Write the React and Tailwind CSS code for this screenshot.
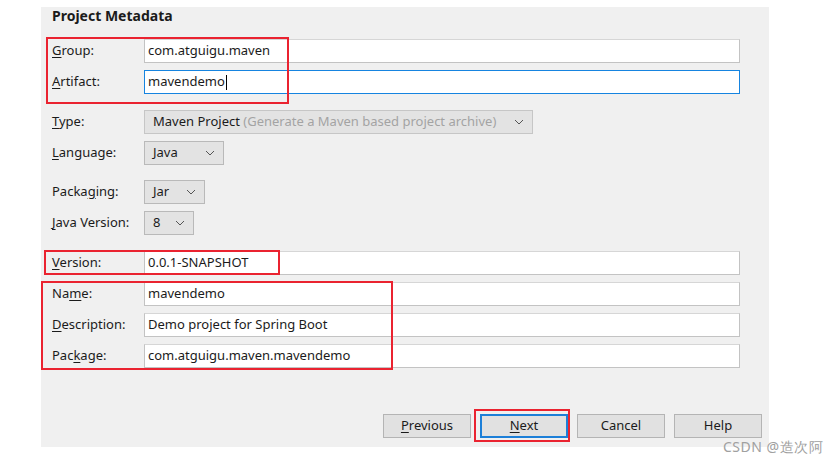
const font = { fontFamily: '"Noto Sans", "Open Sans", sans-serif' };

const U = ({ children }) => <span className="underline underline-offset-2">{children}</span>;

const Chevron = () => (
  <svg width="10" height="6" viewBox="0 0 10 6" className="shrink-0">
    <path d="M1 1l4 4 4-4" fill="none" stroke="#555" strokeWidth="1" />
  </svg>
);

const Row = ({ label, className = "", children }) => (
  <div className={`flex items-center h-6 ${className}`}>
    <div className="w-[92px] shrink-0 text-[13px] text-[#1b1b1b]">{label}</div>
    {children}
  </div>
);

const Field = ({ value, active, cursor }) => (
  <div
    className={`flex items-center h-6 w-[596px] bg-white px-[3px] text-[13px] text-[#1b1b1b] border ${
      active ? "border-[#1684e0]" : "border-[#c3c3c3] border-t-[#d6d6d6]"
    }`}
  >
    {value}
    {cursor && <span className="ml-px h-[15px] w-px bg-black" />}
  </div>
);

const Select = ({ w, children }) => (
  <div
    className={`flex items-center justify-between h-6 ${w} bg-[#e3e3e3] border border-[#b9b9b9] pl-2 pr-2 text-[13px] text-[#1b1b1b]`}
  >
    <span>{children}</span>
    <Chevron />
  </div>
);

const Button = ({ children, primary }) => (
  <div
    className={`flex items-center justify-center w-[88px] h-6 bg-[#e1e1e1] text-[13px] text-[#1b1b1b] ${
      primary ? "border-2 border-[#1c7fd8]" : "border border-[#b4b4b4]"
    }`}
  >
    {children}
  </div>
);

const RedBox = ({ className }) => (
  <div className={`absolute border-2 border-[#ea2330] pointer-events-none ${className}`} />
);

export default function App() {
  return (
    <div className="relative w-[837px] h-[459px] bg-white overflow-hidden" style={font}>
      <div className="relative ml-[41px] mt-[7px] w-[728px] h-[440px] bg-[#f0f0f0] pl-[11px]">
        <div className="h-[17px] text-[14px] font-bold text-[#1b1b1b] leading-[17px]">
          Project Metadata
        </div>

        <Row label={<><U>G</U>roup:</>} className="mt-[15px]">
          <Field value="com.atguigu.maven" />
        </Row>
        <Row label={<><U>A</U>rtifact:</>} className="mt-[7px]">
          <Field value="mavendemo" active cursor />
        </Row>

        <Row label={<><U>T</U>ype:</>} className="mt-[16px]">
          <div className="flex items-center justify-between h-6 w-[389px] bg-[#e3e3e3] border border-[#c6c6c6] pl-2 pr-2 text-[13px]">
            <span className="text-[#1b1b1b]">
              Maven Project <span className="text-[#a3a3a3]">(Generate a Maven based project archive)</span>
            </span>
            <Chevron />
          </div>
        </Row>
        <Row label={<><U>L</U>anguage:</>} className="mt-[7px]">
          <Select w="w-[80px]">Java</Select>
        </Row>
        <Row label={<>Packa<U>g</U>ing:</>} className="mt-[15px]">
          <Select w="w-[61px]">Jar</Select>
        </Row>
        <Row label={<><U>J</U>ava Version:</>} className="mt-[7px]">
          <Select w="w-[50px]">8</Select>
        </Row>

        <Row label={<><U>V</U>ersion:</>} className="mt-[16px]">
          <Field value="0.0.1-SNAPSHOT" />
        </Row>
        <Row label={<>Na<U>m</U>e:</>} className="mt-[7px]">
          <Field value="mavendemo" />
        </Row>
        <Row label={<><U>D</U>escription:</>} className="mt-[7px]">
          <Field value="Demo project for Spring Boot" />
        </Row>
        <Row label={<>Pac<U>k</U>age:</>} className="mt-[7px]">
          <Field value="com.atguigu.maven.mavendemo" />
        </Row>

        <div className="mt-[46px] flex justify-end gap-[9px] pr-[7px]">
          <Button><span><U>P</U>revious</span></Button>
          <Button primary><span><U>N</U>ext</span></Button>
          <Button>Cancel</Button>
          <Button>Help</Button>
        </div>

        <RedBox className="left-[5px] top-[30px] w-[243px] h-[67px]" />
        <RedBox className="left-[3px] top-[243px] w-[236px] h-[25px]" />
        <RedBox className="left-0 top-[274px] w-[352px] h-[89px]" />
        <RedBox className="left-[433px] top-[402px] w-[96px] h-[33px]" />
      </div>
      <div className="absolute left-[723px] top-[436px] text-[14px] text-[#a0a0a0] tracking-[0.5px]">
        CSDN @造次阿
      </div>
    </div>
  );
}
